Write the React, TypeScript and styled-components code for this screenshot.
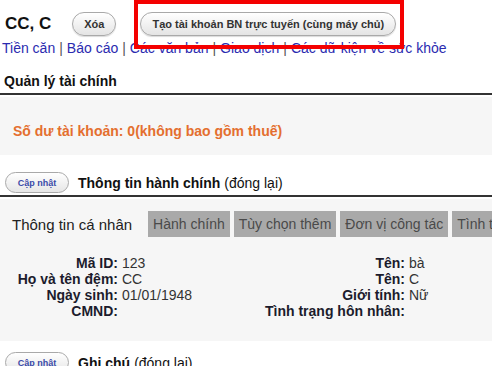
import React from "react";
import styled, { createGlobalStyle } from "styled-components";

const Global = createGlobalStyle`
  html, body { margin: 0; padding: 0; background: #fff; }
  body { font-family: "Liberation Sans", Arial, sans-serif; color: #1c1c2c; }
`;

const Page = styled.div`
  position: relative;
  width: 492px;
  height: 366px;
  overflow: hidden;
`;

const Header = styled.div`
  display: flex;
  align-items: center;
  height: 24px;
  padding: 12px 0 0 5px;
`;

const Name = styled.div`
  font-size: 17px;
  font-weight: bold;
  color: #111;
  margin-right: 21px;
`;

const Pill = styled.button<{ $gap?: number }>`
  height: 24px;
  padding: 0 11px;
  margin-right: ${(p) => p.$gap ?? 0}px;
  border: 1px solid #a9a9a9;
  border-radius: 12px;
  background: linear-gradient(#ffffff, #e4e4e4);
  font-family: "Liberation Sans", Arial, sans-serif;
  font-size: 11px;
  font-weight: bold;
  color: #333;
  box-shadow: 0 1px 1px rgba(0, 0, 0, 0.15);
`;

const Links = styled.div`
  margin-top: 4px;
  padding-left: 2px;
  font-size: 14px;
  line-height: 17px;
  color: #2b2bb0;
`;

const Link = styled.span`
  color: #2b2bb0;
`;

const Sep = styled.span`
  color: #555;
  margin: 0 4px;
`;

const SectionTitle = styled.div`
  margin-top: 16px;
  padding: 0 0 4px 4px;
  font-size: 14px;
  font-weight: bold;
  color: #111;
  border-bottom: 2px solid #333;
`;

const Panel = styled.div<{ $h: number }>`
  height: ${(p) => p.$h}px;
  background: #f6f6f6;
  margin-top: 2px;
  box-sizing: border-box;
`;

const Balance = styled.div`
  padding: 26px 0 0 13px;
  font-size: 14px;
  font-weight: bold;
  color: #e46f2f;
`;

const SectionHeader = styled.div<{ $top: number }>`
  display: flex;
  align-items: center;
  margin-top: ${(p) => p.$top}px;
  padding: 0 0 2px 5px;
  border-bottom: 2px solid #333;
  font-size: 14px;
  color: #111;
`;

const SmallPill = styled.button`
  height: 21px;
  width: 64px;
  padding: 0;
  margin-right: 9px;
  border: 1px solid #a9a9a9;
  border-radius: 11px;
  background: linear-gradient(#ffffff, #e6e6e6);
  font-family: "Liberation Sans", Arial, sans-serif;
  font-size: 9px;
  font-weight: bold;
  color: #3a4aa8;
`;

const Strong = styled.span`
  font-weight: bold;
  margin-right: 4px;
`;

const Tabs = styled.div`
  display: flex;
  align-items: stretch;
  gap: 4px;
  padding: 12px 0 0 0;
  height: 26px;
  white-space: nowrap;
`;

const Tab = styled.div<{ $active?: boolean }>`
  display: flex;
  align-items: center;
  padding: 0 ${(p) => (p.$active ? "12px" : "5px")};
  background: ${(p) => (p.$active ? "transparent" : "#a9a9a9")};
  color: ${(p) => (p.$active ? "#222" : "#4a4a4a")};
  font-size: ${(p) => (p.$active ? "15px" : "14px")};
  flex-shrink: 0;
`;

const Fields = styled.div`
  display: grid;
  grid-template-columns: 118px 130px 149px auto;
  column-gap: 4px;
  padding-top: 18px;
  font-size: 14px;
  line-height: 16px;
  color: #1c1c2c;
`;

const Label = styled.div`
  font-weight: bold;
  text-align: right;
  white-space: nowrap;
`;

const Value = styled.div`
  color: #333;
`;

const Highlight = styled.div`
  position: absolute;
  left: 134px;
  top: 0;
  width: 262px;
  height: 41px;
  border: 4px solid #f40000;
  pointer-events: none;
`;

const fields: [string, string, string, string][] = [
  ["Mã ID:", "123", "Tên:", "bà"],
  ["Họ và tên đệm:", "CC", "Tên:", "C"],
  ["Ngày sinh:", "01/01/1948", "Giới tính:", "Nữ"],
  ["CMND:", "", "Tình trạng hôn nhân:", ""],
];

const links = ["Tiền căn", "Báo cáo", "Các văn bản", "Giao dịch", "Các dữ kiện về sức khỏe"];

export default function App() {
  return (
    <Page>
      <Global />
      <Header>
        <Name>CC, C</Name>
        <Pill $gap={24}>Xóa</Pill>
        <Pill>Tạo tài khoản BN trực tuyến (cùng máy chủ)</Pill>
      </Header>
      <Links>
        {links.map((l, i) => (
          <React.Fragment key={l}>
            {i > 0 && <Sep>|</Sep>}
            <Link>{l}</Link>
          </React.Fragment>
        ))}
      </Links>
      <SectionTitle>Quản lý tài chính</SectionTitle>
      <Panel $h={58}>
        <Balance>Số dư tài khoản: 0(không bao gồm thuế)</Balance>
      </Panel>
      <SectionHeader $top={17}>
        <SmallPill>Cập nhật</SmallPill>
        <Strong>Thông tin hành chính</Strong>(đóng lại)
      </SectionHeader>
      <Panel $h={142}>
        <Tabs>
          <Tab $active>Thông tin cá nhân</Tab>
          <Tab>Hành chính</Tab>
          <Tab>Tùy chọn thêm</Tab>
          <Tab>Đơn vị công tác</Tab>
          <Tab>Tình trạng</Tab>
        </Tabs>
        <Fields>
          {fields.map((r, i) => (
            <React.Fragment key={i}>
              <Label>{r[0]}</Label>
              <Value>{r[1]}</Value>
              <Label>{r[2]}</Label>
              <Value>{r[3]}</Value>
            </React.Fragment>
          ))}
        </Fields>
      </Panel>
      <SectionHeader $top={11}>
        <SmallPill>Cập nhật</SmallPill>
        <Strong>Ghi chú</Strong>(đóng lại)
      </SectionHeader>
      <Highlight />
    </Page>
  );
}
